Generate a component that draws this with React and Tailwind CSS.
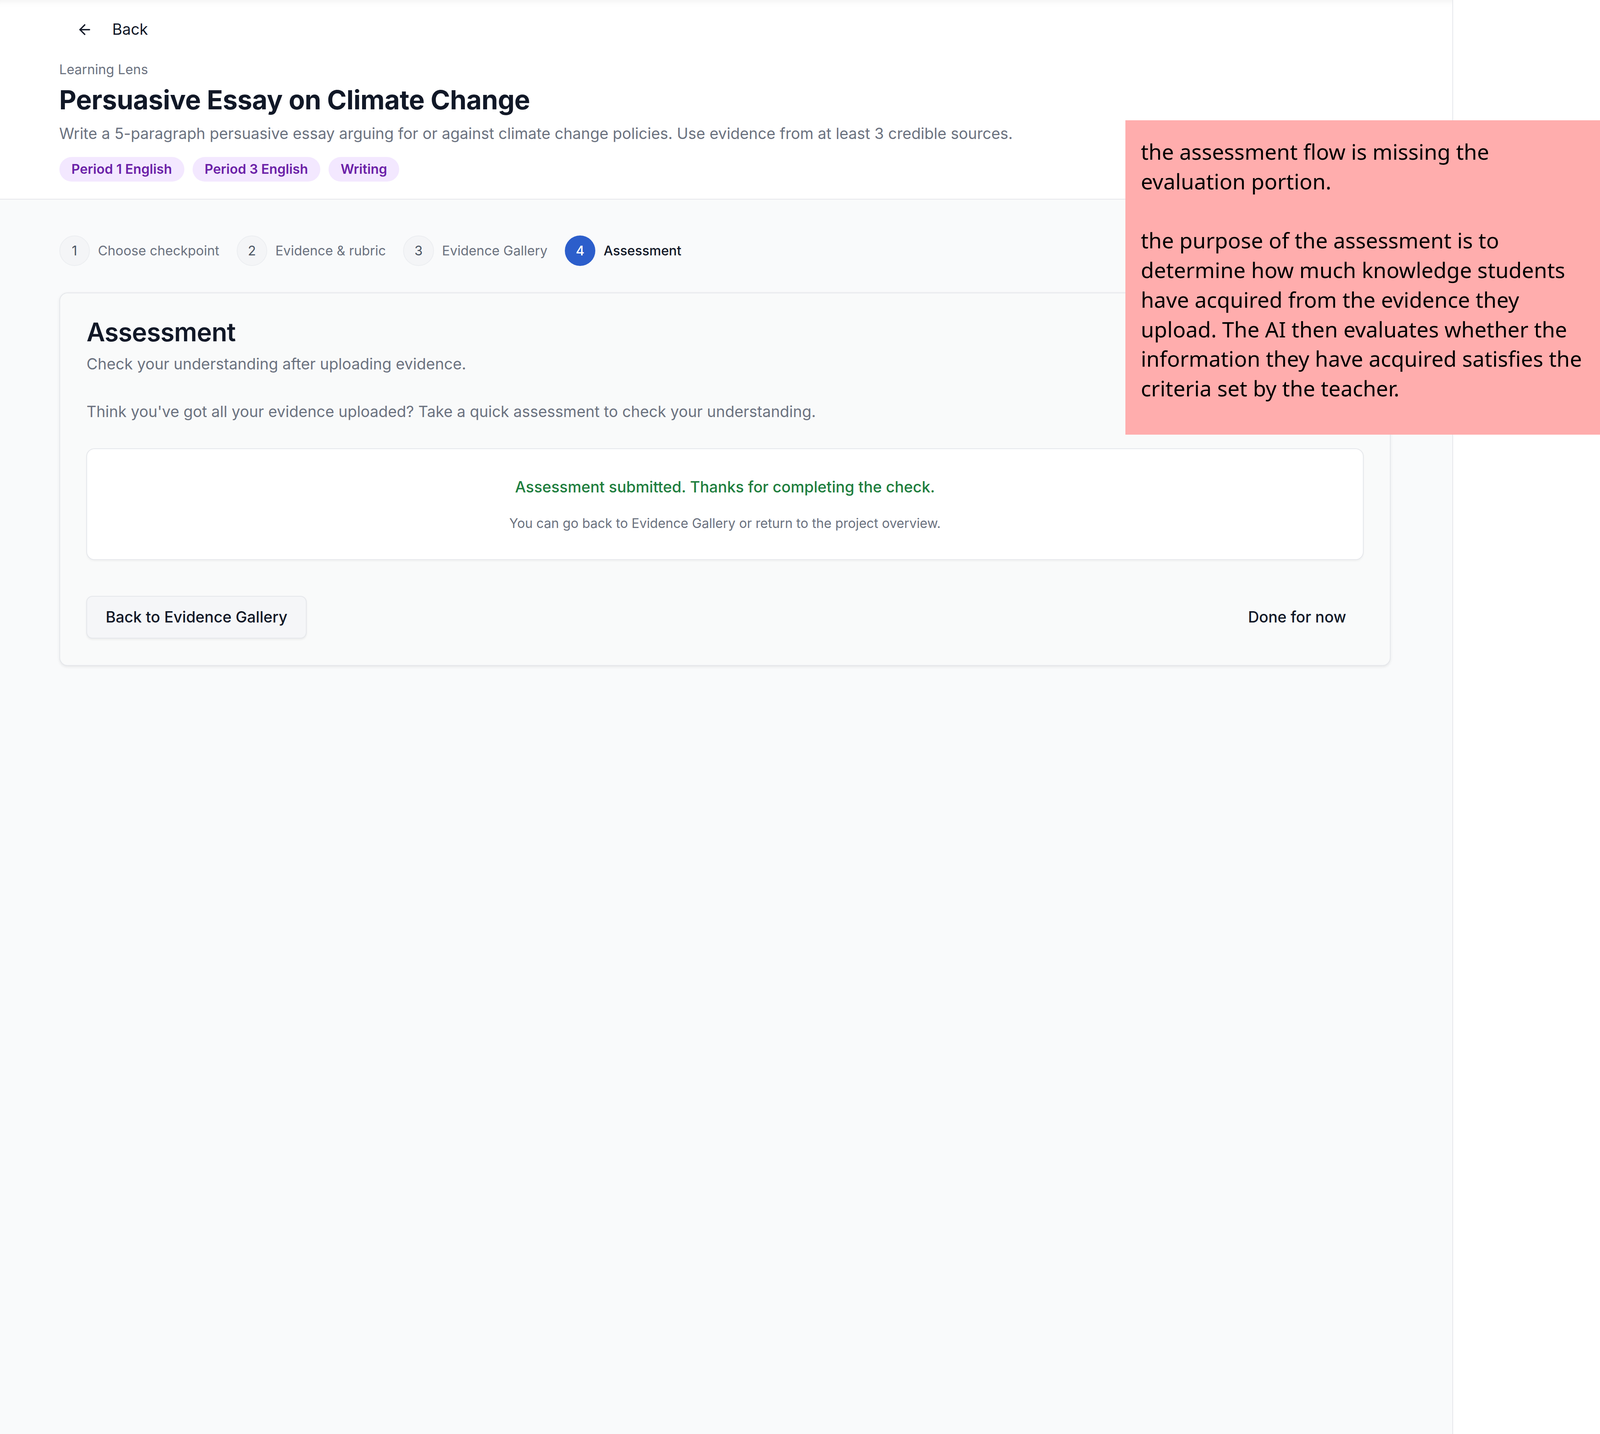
import React, { useLayoutEffect, useState } from "react";
import { ArrowLeft } from "lucide-react";

function measure() {
  if (typeof window === "undefined") return { scale: 1, height: 781 };
  const w = document.documentElement.clientWidth || window.innerWidth || 1568;
  const h = document.documentElement.clientHeight || window.innerHeight || 781;
  const scale = w / 1568;
  return { scale, height: Math.max(781, h / scale) };
}

function Step({ n, label, active }) {
  return (
    <div className="flex items-center gap-[8px]">
      <div
        className={
          active
            ? "flex h-[30px] w-[30px] items-center justify-center rounded-full bg-[#2c5ecb] text-[13px] font-medium text-white"
            : "flex h-[30px] w-[30px] items-center justify-center rounded-full border border-[#eceef1] bg-[#f4f5f7] text-[13px] text-[#4b5563]"
        }
      >
        {n}
      </div>
      <span className={active ? "text-[13px] font-medium text-[#111827]" : "text-[13px] text-[#6b7280]"}>{label}</span>
    </div>
  );
}

function Tag({ children }) {
  return (
    <span className="flex h-[24px] items-center rounded-full bg-[#f3e8ff] px-[12px] text-[13px] font-semibold text-[#6b21a8]">
      {children}
    </span>
  );
}

export default function App() {
  const [m, setM] = useState(measure);
  useLayoutEffect(() => {
    const update = () => setM(measure());
    update();
    window.addEventListener("resize", update);
    return () => window.removeEventListener("resize", update);
  }, []);

  return (
    <div className="overflow-hidden bg-white">
      <div
        style={{ zoom: m.scale, minHeight: m.height }}
        className="relative flex w-[1568px] bg-white font-['Inter',sans-serif] text-[#111827]"
      >
        <main className="flex w-[1424px] flex-col border-r border-[#e5e7eb] bg-[#f9fafb]">
          <header className="flex flex-col border-b border-[#e5e7eb] bg-white px-[58px] pb-[17px] shadow-[inset_0_8px_8px_-8px_rgba(0,0,0,0.08)]">
            <button className="flex h-[58px] items-center gap-[19px] pl-[17px] text-[15px] text-[#111827]">
              <ArrowLeft className="h-[16px] w-[16px]" strokeWidth={2} />
              <span>Back</span>
            </button>
            <div className="text-[13px] leading-[20px] text-[#6b7280]">Learning Lens</div>
            <h1 className="mt-[4px] text-[26px] font-bold leading-[32px] tracking-[-0.2px] text-[#111827]">
              Persuasive Essay on Climate Change
            </h1>
            <p className="mt-[6px] text-[15px] leading-[22px] text-[#6b7280]">
              Write a 5-paragraph persuasive essay arguing for or against climate change policies. Use evidence from at least 3 credible sources.
            </p>
            <div className="mt-[12px] flex gap-[8px]">
              <Tag>Period 1 English</Tag>
              <Tag>Period 3 English</Tag>
              <Tag>Writing</Tag>
            </div>
          </header>

          <div className="flex flex-col px-[58px] pt-[35px]">
            <div className="flex items-center gap-[17px]">
              <Step n="1" label="Choose checkpoint" />
              <Step n="2" label="Evidence & rubric" />
              <Step n="3" label="Evidence Gallery" />
              <Step n="4" label="Assessment" active />
            </div>

            <section className="mt-[26px] flex w-[1305px] flex-col rounded-[8px] border border-[#e5e7eb] bg-[#f9fafa] px-[26px] pb-[26px] pt-[22px] shadow-[0_1px_3px_rgba(0,0,0,0.08)]">
              <h2 className="text-[25px] font-semibold leading-[32px] tracking-[-0.3px] text-[#111827]">Assessment</h2>
              <p className="mt-[4px] text-[15px] leading-[22px] text-[#6b7280]">Check your understanding after uploading evidence.</p>
              <p className="mt-[25px] text-[15px] leading-[22px] text-[#6b7280]">
                Think you've got all your evidence uploaded? Take a quick assessment to check your understanding.
              </p>
              <div className="mt-[25px] flex flex-col items-center rounded-[8px] border border-[#e5e7eb] bg-white pb-[26px] pt-[26px] shadow-[0_1px_2px_rgba(0,0,0,0.04)]">
                <p className="text-[15px] font-medium leading-[22px] text-[#1e7e3e]">
                  Assessment submitted. Thanks for completing the check.
                </p>
                <p className="mt-[16px] text-[12.8px] leading-[18px] text-[#6b7280]">
                  You can go back to Evidence Gallery or return to the project overview.
                </p>
              </div>
              <div className="mt-[35px] flex items-center justify-between">
                <button className="flex h-[42px] items-center rounded-[6px] border border-[#e5e7eb] bg-[#f5f6f8] px-[18px] text-[15px] font-medium text-[#111827] shadow-[0_1px_2px_rgba(0,0,0,0.06)]">
                  Back to Evidence Gallery
                </button>
                <button className="flex h-[42px] items-center rounded-[6px] px-[17px] text-[15px] font-medium text-[#111827]">
                  Done for now
                </button>
              </div>
            </section>
          </div>
        </main>

        <div className="absolute left-[1103px] top-[118px] h-[308px] w-[465px] bg-[#ffadad] pl-[15px] pt-[16px] font-['Noto_Sans',sans-serif] text-[21px] leading-[29px] text-black">
          <p className="whitespace-nowrap">
            the assessment flow is missing the
            <br />
            evaluation portion.
          </p>
          <p className="mt-[29px] whitespace-nowrap">
            the purpose of the assessment is to
            <br />
            determine how much knowledge students
            <br />
            have acquired from the evidence they
            <br />
            upload. The AI then evaluates whether the
            <br />
            information they have acquired satisfies the
            <br />
            criteria set by the teacher.
          </p>
        </div>
      </div>
    </div>
  );
}
